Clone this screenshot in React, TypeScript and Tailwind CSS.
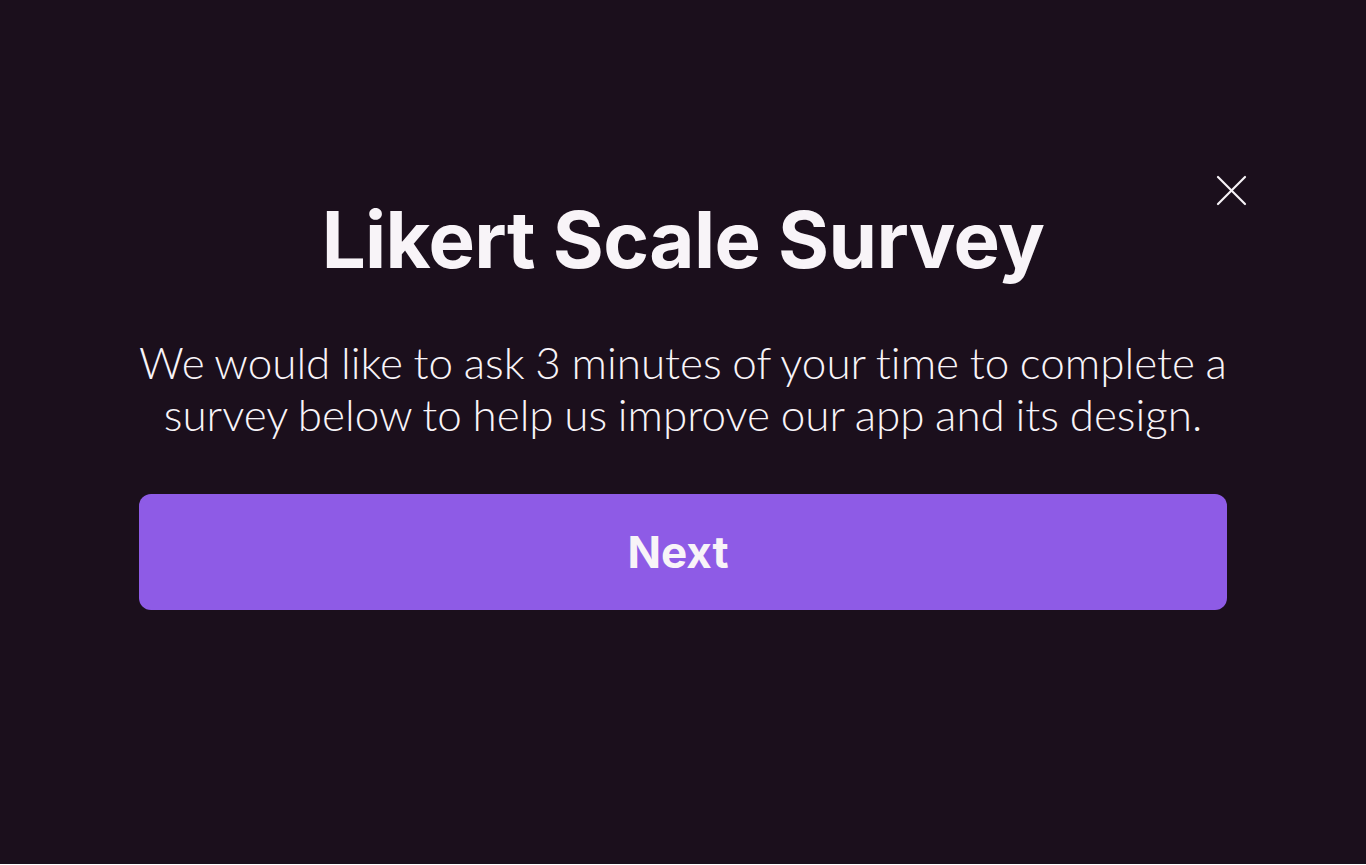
export default function App() {
  return (
    <div className="h-[864px] w-full bg-[#1b0f1c] flex flex-col items-center">
      <div className="relative w-full flex flex-col items-center pt-[194px]">
        <button className="absolute left-[1216px] top-[175px] text-[#f8f4f8]">
          <svg width="31" height="31" viewBox="0 0 31 31" fill="none" stroke="currentColor" strokeWidth="2.2" strokeLinecap="round">
            <path d="M2 2L29 29" />
            <path d="M29 2L2 29" />
          </svg>
        </button>

        <h1 className="font-['Inter',sans-serif] font-bold text-[78px] leading-[92px] tracking-[-0.008em] text-[#f8f4f8]">
          Likert Scale Survey
        </h1>

        <p className="mt-[50px] font-['Lato',sans-serif] font-light text-[44px] leading-[52px] [word-spacing:-0.03em] [font-variant-ligatures:none] text-center text-[#f8f4f8]">
          We would like to ask 3 minutes of your time to complete a
          <br />
          survey below to help us improve our app and its design.
        </p>

        <button className="mt-[54px] w-[1088px] h-[116px] rounded-[12px] bg-[#8e5be6] font-['Inter',sans-serif] font-bold text-[44px] pr-[10px] text-[#f8f4f8]">
          Next
        </button>
      </div>
    </div>
  );
}
